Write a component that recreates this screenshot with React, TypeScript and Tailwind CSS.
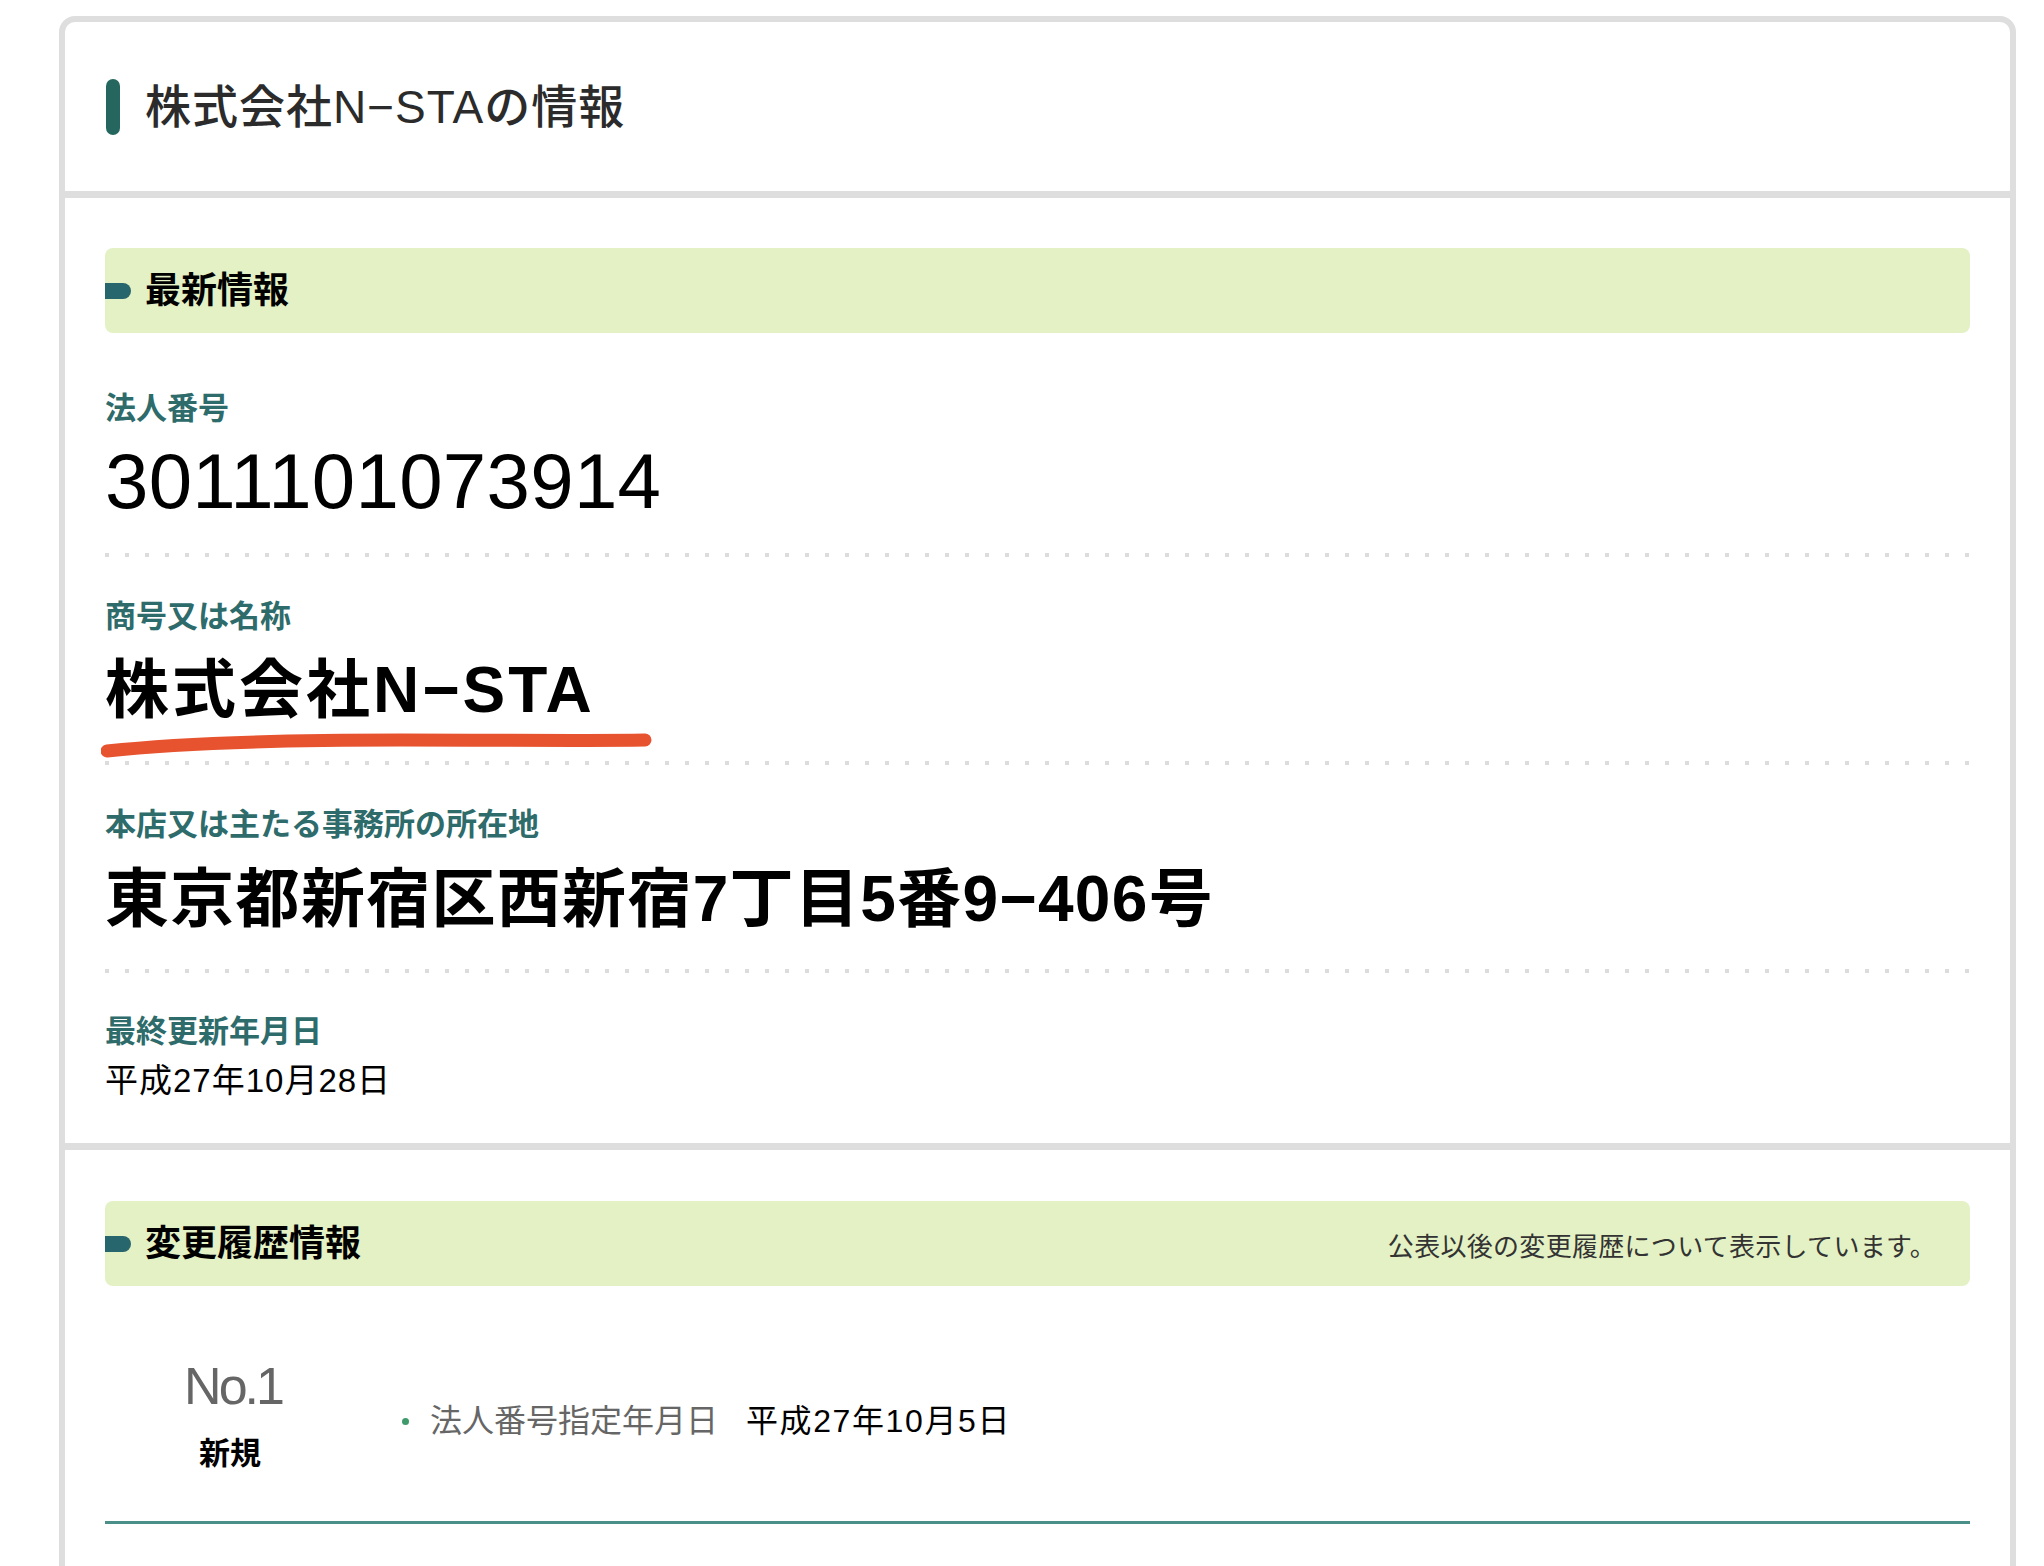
const font = "font-['Liberation_Sans','Noto_Sans_CJK_JP',sans-serif]";

const Dots = () => (
  <div className="h-[4px] w-full bg-[linear-gradient(to_right,#dcdcdc_4px,transparent_4px)] bg-[length:20px_4px] bg-repeat-x" />
);

const SectionBar = ({ title, note }: { title: string; note?: string }) => (
  <div className="flex h-[85px] items-center justify-between rounded-[8px] bg-[#e3f1c4]">
    <div className="flex items-center">
      <span className="h-[16px] w-[26px] rounded-r-full bg-[#28666d]" />
      <h3 className="ml-[14px] text-[36px] font-bold leading-[44px] text-black">{title}</h3>
    </div>
    {note && <p className="pr-[34px] pt-[6px] text-[26px] leading-[34px] tracking-[0.3px] text-[#333]">{note}</p>}
  </div>
);

const Label = ({ children }: { children: string }) => (
  <p className="text-[31px] font-bold leading-[40px] text-[#2e6b6b]">{children}</p>
);

export default function App() {
  return (
    <div className={`h-[1566px] w-[2044px] overflow-hidden bg-white pl-[59px] pt-[16px] ${font}`}>
      <div className="w-[1957px] rounded-[16px] border-[6px] border-[#dedede] bg-white pb-[300px]">
        {/* header */}
        <div className="flex h-[169px] items-center pl-[41px]">
          <span className="h-[56px] w-[14px] rounded-full bg-[#25675f]" />
          <h2 className="ml-[25px] text-[46px] font-medium leading-[56px] tracking-[1px] text-[#2b2b2b]">
            株式会社N−STAの情報
          </h2>
        </div>
        <div className="h-[7px] bg-[#dedede]" />

        {/* latest */}
        <section className="px-[40px] pt-[50px] pb-[40px]">
          <SectionBar title="最新情報" />

          <div className="mt-[56px]">
            <Label>法人番号</Label>
            <p className="mt-[8px] text-[78px] leading-[88px] tracking-[0.3px] text-black">3011101073914</p>
          </div>
          <div className="mt-[28px]">
            <Dots />
          </div>

          <div className="mt-[40px]">
            <Label>商号又は名称</Label>
            <div className="relative mt-[13px]">
              <p className="text-[64px] font-bold leading-[80px] tracking-[3px] text-black">株式会社N−STA</p>
              <svg className="absolute left-[-4px] top-[82px]" width="560" height="30" viewBox="0 0 560 30">
                <path
                  d="M6 19 C 80 11, 200 8, 300 8 S 490 9, 544 8"
                  fill="none"
                  stroke="#e8532f"
                  strokeWidth="13"
                  strokeLinecap="round"
                />
              </svg>
            </div>
          </div>
          <div className="mt-[31px]">
            <Dots />
          </div>

          <div className="mt-[40px]">
            <Label>本店又は主たる事務所の所在地</Label>
            <p className="mt-[14px] text-[64px] font-bold leading-[80px] tracking-[1.3px] text-black">
              東京都新宿区西新宿7丁目5番9−406号
            </p>
          </div>
          <div className="mt-[30px]">
            <Dots />
          </div>

          <div className="mt-[39px]">
            <Label>最終更新年月日</Label>
            <p className="mt-[7px] text-[33px] leading-[44px] tracking-[1px] text-black">平成27年10月28日</p>
          </div>
        </section>
        <div className="h-[7px] bg-[#dedede]" />

        {/* history */}
        <section className="px-[40px] pt-[51px]">
          <SectionBar title="変更履歴情報" note="公表以後の変更履歴について表示しています。" />

          <div className="mt-[72px] flex items-center">
            <div className="flex w-[250px] flex-col items-center">
              <p className="pl-[6px] text-[52px] font-medium leading-[56px] tracking-[-3px] text-[#666]">No.1</p>
              <p className="mt-[20px] text-[31px] font-bold leading-[40px] text-black">新規</p>
            </div>
            <ul className="ml-[47px] pt-[10px]">
              <li className="flex items-center">
                <span className="h-[7px] w-[7px] rounded-full bg-[#3f9a6b]" />
                <span className="ml-[21px] text-[32px] leading-[44px] text-[#666]">法人番号指定年月日</span>
                <span className="ml-[28px] text-[32px] leading-[44px] tracking-[1.6px] text-black">平成27年10月5日</span>
              </li>
            </ul>
          </div>
          <div className="mt-[47px] h-[3px] bg-[#4a8f88]" />
        </section>
      </div>
    </div>
  );
}
